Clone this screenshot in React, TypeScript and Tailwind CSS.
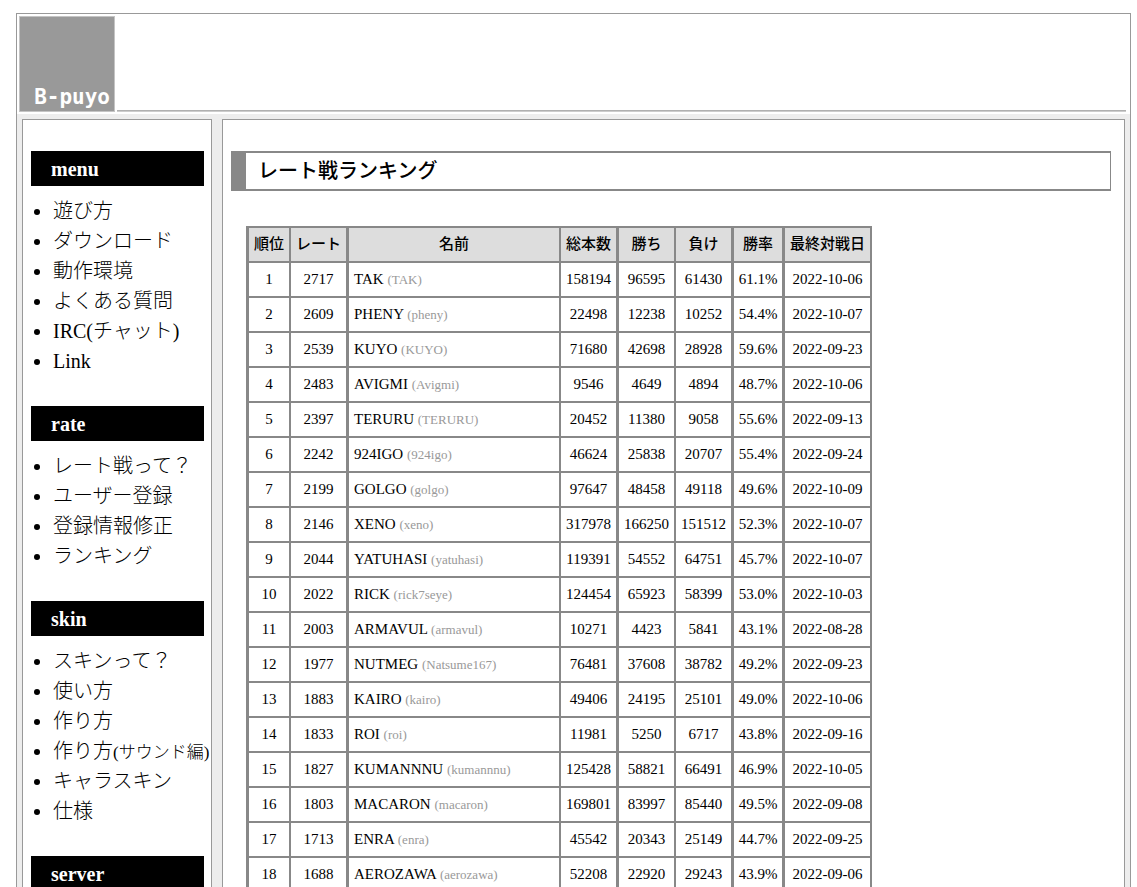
type MenuItem = { label: string; note?: string };
type MenuSection = { title: string; items: MenuItem[] };

const sections: MenuSection[] = [
  {
    title: "menu",
    items: [
      { label: "遊び方" },
      { label: "ダウンロード" },
      { label: "動作環境" },
      { label: "よくある質問" },
      { label: "IRC(チャット)" },
      { label: "Link" },
    ],
  },
  {
    title: "rate",
    items: [
      { label: "レート戦って？" },
      { label: "ユーザー登録" },
      { label: "登録情報修正" },
      { label: "ランキング" },
    ],
  },
  {
    title: "skin",
    items: [
      { label: "スキンって？" },
      { label: "使い方" },
      { label: "作り方" },
      { label: "作り方", note: "(サウンド編)" },
      { label: "キャラスキン" },
      { label: "仕様" },
    ],
  },
  { title: "server", items: [] },
];

const columns = [
  { label: "順位", width: "w-[42px]", edge: "border-r-2" },
  { label: "レート", width: "w-[58px]", edge: "border-r-3" },
  { label: "名前", width: "w-[212px]", edge: "border-r-2" },
  { label: "総本数", width: "w-[58px]", edge: "border-r-3" },
  { label: "勝ち", width: "w-[57px]", edge: "border-r-2" },
  { label: "負け", width: "w-[58px]", edge: "border-r-3" },
  { label: "勝率", width: "w-[51px]", edge: "border-r-3" },
  { label: "最終対戦日", width: "w-[87px]", edge: "border-r-2" },
];

// rate, name, account, total, wins, losses, win rate, last match
const players: string[][] = [
  ["2717", "TAK", "TAK", "158194", "96595", "61430", "61.1%", "2022-10-06"],
  ["2609", "PHENY", "pheny", "22498", "12238", "10252", "54.4%", "2022-10-07"],
  ["2539", "KUYO", "KUYO", "71680", "42698", "28928", "59.6%", "2022-09-23"],
  ["2483", "AVIGMI", "Avigmi", "9546", "4649", "4894", "48.7%", "2022-10-06"],
  ["2397", "TERURU", "TERURU", "20452", "11380", "9058", "55.6%", "2022-09-13"],
  ["2242", "924IGO", "924igo", "46624", "25838", "20707", "55.4%", "2022-09-24"],
  ["2199", "GOLGO", "golgo", "97647", "48458", "49118", "49.6%", "2022-10-09"],
  ["2146", "XENO", "xeno", "317978", "166250", "151512", "52.3%", "2022-10-07"],
  ["2044", "YATUHASI", "yatuhasi", "119391", "54552", "64751", "45.7%", "2022-10-07"],
  ["2022", "RICK", "rick7seye", "124454", "65923", "58399", "53.0%", "2022-10-03"],
  ["2003", "ARMAVUL", "armavul", "10271", "4423", "5841", "43.1%", "2022-08-28"],
  ["1977", "NUTMEG", "Natsume167", "76481", "37608", "38782", "49.2%", "2022-09-23"],
  ["1883", "KAIRO", "kairo", "49406", "24195", "25101", "49.0%", "2022-10-06"],
  ["1833", "ROI", "roi", "11981", "5250", "6717", "43.8%", "2022-09-16"],
  ["1827", "KUMANNNU", "kumannnu", "125428", "58821", "66491", "46.9%", "2022-10-05"],
  ["1803", "MACARON", "macaron", "169801", "83997", "85440", "49.5%", "2022-09-08"],
  ["1713", "ENRA", "enra", "45542", "20343", "25149", "44.7%", "2022-09-25"],
  ["1688", "AEROZAWA", "aerozawa", "52208", "22920", "29243", "43.9%", "2022-09-06"],
];

function Header() {
  return (
    <header className="flex items-end gap-0.5 bg-white p-0.5">
      <a
        href="#top"
        className="flex h-24 w-24 shrink-0 items-end justify-end border border-[#c4c4c4] bg-[#999999] pr-1 font-['DejaVu_Sans_Mono',monospace] text-[21px] leading-7 font-bold text-white"
      >
        B-puyo
      </a>
      <div className="mr-0.5 h-0.5 grow border-t border-[#b0b0b0] bg-[#cccccc]" />
    </header>
  );
}

function Sidebar() {
  return (
    <nav className="w-[190px] shrink-0 border border-[#999999] bg-white pt-[31px] pr-[7px] pl-2">
      {sections.map((section) => (
        <section key={section.title} className="mb-[30px]">
          <h2 className="mb-2.5 h-[35px] bg-black pl-5 text-[20px] leading-9 font-bold text-white">
            {section.title}
          </h2>
          <ul className="list-disc pl-[22px] text-[20px] leading-[30px] font-light">
            {section.items.map((item) => (
              <li key={item.label + (item.note ?? "")} className="h-[30px] whitespace-nowrap">
                <a href="#menu">
                  {item.label}
                  {item.note && <span className="text-[17px]">{item.note}</span>}
                </a>
              </li>
            ))}
          </ul>
        </section>
      ))}
    </nav>
  );
}

function RankingTable() {
  return (
    <table className="mt-[35px] ml-[15px] table-fixed border-separate border-spacing-0 border-t-2 border-l-3 border-[#888888] text-center text-[15px] leading-[33px]">
      <thead>
        <tr>
          {columns.map((column) => (
            <th
              key={column.label}
              scope="col"
              className={`${column.width} ${column.edge} border-b-2 border-[#888888] bg-[#dddddd] p-0 font-medium whitespace-nowrap`}
            >
              {column.label}
            </th>
          ))}
        </tr>
      </thead>
      <tbody>
        {players.map(([rate, name, account, ...stats], index) => (
          <tr key={name}>
            <td className="border-r-2 border-b-2 border-[#888888] p-0">{index + 1}</td>
            <td className="border-r-3 border-b-2 border-[#888888] p-0">{rate}</td>
            <td className="border-r-2 border-b-2 border-[#888888] p-0 pl-[5px] text-left">
              {name} <span className="text-[13px] leading-none text-[#999999]">({account})</span>
            </td>
            {stats.map((value, i) => (
              <td
                key={columns[i + 3].label}
                className={`${columns[i + 3].edge} border-b-2 border-[#888888] p-0`}
              >
                {value}
              </td>
            ))}
          </tr>
        ))}
      </tbody>
    </table>
  );
}

export default function App() {
  return (
    <div
      id="top"
      className="bg-white pt-[13px] pr-1.5 pb-4 pl-4 font-['Liberation_Serif','Noto_Sans_CJK_JP',serif] text-black"
    >
      <div className="border border-[#999999] bg-[#ededed]">
        <Header />
        <div id="menu" className="flex gap-2.5 p-[5px]">
          <Sidebar />
          <main className="min-w-0 grow border border-[#999999] bg-white pt-[31px] pr-[13px] pb-8 pl-2">
            <h1 className="border-y-2 border-r border-l-[15px] border-[#888888] pl-3 text-[20px] leading-9 font-medium">
              レート戦ランキング
            </h1>
            <RankingTable />
          </main>
        </div>
      </div>
    </div>
  );
}
